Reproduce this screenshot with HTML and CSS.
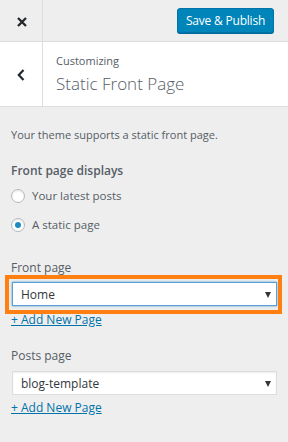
FILE: index.html
```html
<!DOCTYPE html>
<html>
<head>
<meta charset="utf-8">
<link rel="stylesheet" href="styles.css">
</head>
<body>
<div class="panel">
  <header class="topbar">
    <div class="close">
      <svg width="10" height="10" viewBox="0 0 10 10"><path d="M1 1 L9 9 M9 1 L1 9" stroke="#23282d" stroke-width="2.3"/></svg>
    </div>
    <button class="publish">Save &amp; Publish</button>
  </header>
  <div class="section-title">
    <div class="back">
      <svg width="8" height="12" viewBox="0 0 8 12"><path d="M6.5 1 L1.8 6 L6.5 11" fill="none" stroke="#23282d" stroke-width="2.2"/></svg>
    </div>
    <div class="titles">
      <div class="crumb">Customizing</div>
      <div class="heading">Static Front Page</div>
    </div>
  </div>
  <div class="content">
    <p class="desc">Your theme supports a static front page.</p>
    <div class="control-title">Front page displays</div>
    <div class="radio-row first"><span class="radio"></span><span class="radio-label">Your latest posts</span></div>
    <div class="radio-row"><span class="radio checked"></span><span class="radio-label">A static page</span></div>

    <div class="field first">
      <div class="label">Front page</div>
      <div class="select focused"><span class="value">Home</span><span class="arrow"></span>
        <div class="highlight"></div>
      </div>
      <a class="add" href="#">+ Add New Page</a>
    </div>

    <div class="field second">
      <div class="label">Posts page</div>
      <div class="select"><span class="value">blog-template</span><span class="arrow"></span></div>
      <a class="add" href="#">+ Add New Page</a>
    </div>
  </div>
</div>
</body>
</html>
```
FILE: styles.css
```css
html, body {
  margin: 0;
  padding: 0;
}
body {
  background: #eeeeee;
  font-family: "Open Sans", "Noto Sans", sans-serif;
  color: #555d66;
  width: 288px;
  height: 442px;
  overflow: hidden;
}
.topbar {
  display: flex;
  align-items: center;
  justify-content: space-between;
  height: 41px;
  border-bottom: 1px solid #dddddd;
  background: #eeeeee;
}
.close {
  width: 43px;
  height: 41px;
  border-right: 1px solid #dddddd;
  display: flex;
  align-items: center;
  justify-content: center;
  box-sizing: border-box;
  padding-top: 3px;
  padding-left: 2px;
}
.publish {
  margin-right: 14px;
  width: 97px;
  height: 25px;
  background: #0085ba;
  border: 1px solid #0073aa;
  border-radius: 3px;
  box-shadow: 0 1px 0 #006799;
  color: #ffffff;
  font-family: inherit;
  font-size: 12px;
  letter-spacing: -0.2px;
  padding: 0;
}
.section-title {
  display: flex;
  height: 64px;
  background: #ffffff;
  border-bottom: 1px solid #dddddd;
}
.back {
  width: 43px;
  box-sizing: border-box;
  border-right: 1px solid #dddddd;
  display: flex;
  align-items: center;
  justify-content: center;
  padding-top: 1px;
}
.titles {
  padding-left: 13px;
  padding-top: 11px;
}
.crumb {
  font-size: 11px;
  line-height: 16px;
}
.heading {
  font-size: 17px;
  font-weight: 300;
  line-height: 24px;
  margin-top: 3px;
}
.content {
  padding: 0 11px 0 11px;
}
.desc {
  margin: 20px 0 0 0;
  font-size: 11px;
  line-height: 16px;
}
.control-title {
  margin-top: 19px;
  font-size: 12px;
  font-weight: 600;
  line-height: 18px;
}
.radio-row {
  display: flex;
  align-items: center;
  gap: 7px;
  height: 29px;
}
.radio-row.first {
  margin-top: 1px;
}
.radio-label {
  font-size: 11.5px;
  line-height: 16px;
}
.radio {
  width: 14px;
  height: 14px;
  border: 1px solid #b4b9be;
  border-radius: 50%;
  background: #ffffff;
  box-sizing: border-box;
  box-shadow: inset 0 1px 2px rgba(0,0,0,0.1);
  display: flex;
  align-items: center;
  justify-content: center;
}
.radio.checked::after {
  content: "";
  width: 6px;
  height: 6px;
  border-radius: 50%;
  background: #1e8cbe;
}
.field.first {
  margin-top: 20px;
}
.field.second {
  margin-top: 18px;
}
.label {
  font-size: 12px;
  line-height: 18px;
}
.select {
  position: relative;
  margin: 5px 0 0 1px;
  height: 24px;
  box-sizing: border-box;
  border: 1px solid #dddddd;
  background: #ffffff;
  box-shadow: inset 0 1px 2px rgba(0,0,0,0.07);
  display: flex;
  align-items: center;
  justify-content: space-between;
  padding: 1px 5px 0 8px;
  font-size: 12px;
  color: #32373c;
}
.second .select {
  margin-top: 6px;
}
.value {
  line-height: 16px;
}
.select.focused {
  border-color: #5b9dd9;
  box-shadow: 0 0 2px rgba(30,140,190,0.8);
}
.arrow {
  width: 0;
  height: 0;
  border-left: 3px solid transparent;
  border-right: 3px solid transparent;
  border-top: 6px solid #32373c;
}
.highlight {
  position: absolute;
  left: -8px;
  top: -8px;
  width: 277px;
  height: 39px;
  box-sizing: border-box;
  border: 4px solid #ff7f10;
  pointer-events: none;
}
.add {
  display: inline-block;
  margin-top: 5px;
  font-size: 12px;
  line-height: 18px;
  color: #0073aa;
  text-decoration: underline;
}
.second .add {
  margin-top: 3px;
}
```
